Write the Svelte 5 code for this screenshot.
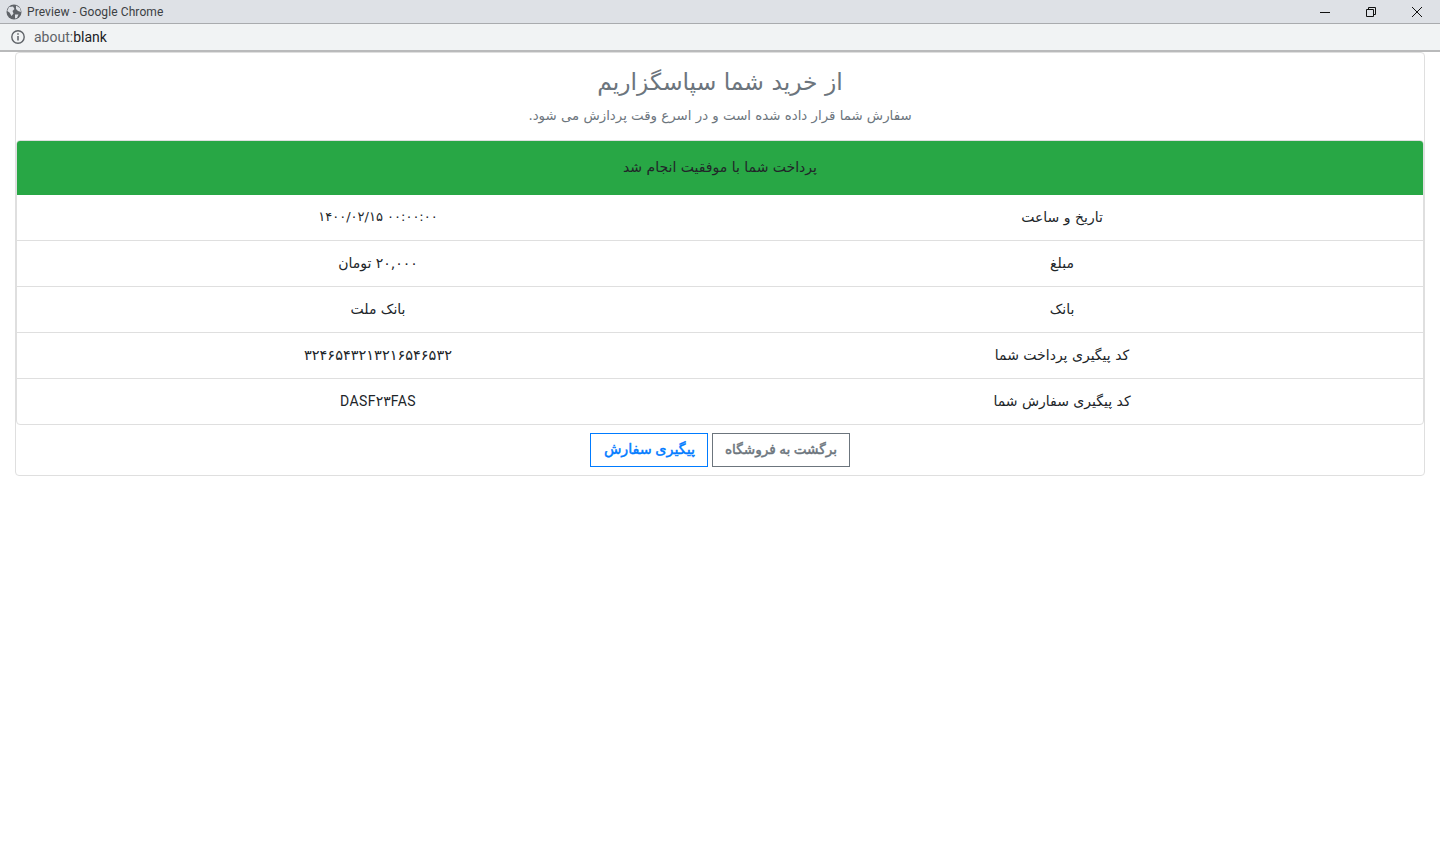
<script>
	const rows = [
		{ label: "تاریخ و ساعت", value: "۱۴۰۰/۰۲/۱۵ ۰۰:۰۰:۰۰", kind: "date" },
		{ label: "مبلغ", value: "۲۰,۰۰۰ تومان", kind: "" },
		{ label: "بانک", value: "بانک ملت", kind: "" },
		{ label: "کد پیگیری پرداخت شما", value: "۳۲۴۶۵۴۳۲۱۳۲۱۶۵۴۶۵۳۲", kind: "code" },
		{ label: "کد پیگیری سفارش شما", value: "DASF۲۳FAS", kind: "latin" },
	];
</script>

<div class="titlebar">
	<svg class="globe" viewBox="0 0 16 16" width="16" height="16">
		<circle cx="8" cy="8" r="7.5" fill="#5f6368" />
		<path d="M3 3 L7 2.6 L8.5 5 L6.5 7 L7.5 9.5 L5.5 12 L3.5 8.5 L1.2 7 Z M10 1.5 L14 4 L15 8 L12 7 L10 5 Z M9 10.5 L12.5 10.5 L11 14 L9 14.5 Z" fill="#dee1e6" />
	</svg>
	<span class="title">Preview - Google Chrome</span>
	<div class="controls">
		<svg width="10" height="10" viewBox="0 0 10 10"><path d="M0 5.5H10" stroke="#111" fill="none" /></svg>
		<svg width="10" height="10" viewBox="0 0 10 10"><path d="M0.5 2.5H7.5V9.5H0.5Z M2.5 2.5V0.5H9.5V7.5H7.5" stroke="#111" fill="none" /></svg>
		<svg width="10" height="10" viewBox="0 0 10 10"><path d="M0 0L10 10M10 0L0 10" stroke="#111" fill="none" /></svg>
	</div>
</div>
<div class="addressbar">
	<svg width="14" height="14" viewBox="0 0 14 14">
		<circle cx="7" cy="7" r="6.2" fill="none" stroke="#5f6368" stroke-width="1.4" />
		<path d="M7 6V10.6M7 3.2V4.8" stroke="#5f6368" stroke-width="1.5" fill="none" />
	</svg>
	<span class="url"><span class="scheme">about:</span>blank</span>
</div>

<main class="card">
	<header dir="rtl">
		<h1>از خرید شما سپاسگزاریم</h1>
		<p>سفارش شما قرار داده شده است و در اسرع وقت پردازش می شود.</p>
	</header>
	<div class="box" dir="rtl">
		<div class="status">پرداخت شما با موفقیت انجام شد</div>
		{#each rows as row}
			<div class="row">
				<div>{row.label}</div>
				<div class={row.kind} dir={row.kind === "date" ? "ltr" : "rtl"}>{row.value}</div>
			</div>
		{/each}
	</div>
	<footer dir="rtl">
		<button class="muted">برگشت به فروشگاه</button>
		<button class="primary">پیگیری سفارش</button>
	</footer>
</main>

<style>
	:global(body) {
		background: #fff;
		font-family: "DejaVu Sans", sans-serif;
	}

	.titlebar {
		height: 23px;
		background: #dee1e6;
		border-bottom: 1px solid #a9abae;
		display: flex;
		align-items: center;
		padding-left: 6px;
		font-family: Roboto, sans-serif;
		font-size: 12px;
		letter-spacing: 0.1px;
		color: #3c4043;
	}

	.title {
		margin-left: 5px;
	}

	.controls {
		margin-left: auto;
		display: flex;
		gap: 36px;
		padding-right: 18px;
	}

	.addressbar {
		height: 26px;
		background: #f1f3f4;
		border-bottom: 2px solid #b9babb;
		display: flex;
		align-items: center;
		padding-left: 11px;
		font-family: Roboto, sans-serif;
		font-size: 14px;
		color: #202124;
	}

	.url {
		margin-left: 9px;
	}

	.scheme {
		color: #5f6368;
	}

	.card {
		width: 1408px;
		margin: 0 15px;
		border: 1px solid #dfdfdf;
		border-radius: 4px;
		background: #fff;
	}

	header {
		height: 87px;
		text-align: center;
		color: #6c757d;
	}

	h1 {
		margin: 0;
		padding-top: 13px;
		font-size: 23.4px;
		line-height: 32px;
		font-weight: 400;
	}

	p {
		margin: 0;
		padding-top: 8px;
		font-size: 13.35px;
		line-height: 20px;
	}

	.box {
		border: 1px solid #dfdfdf;
		border-radius: 4px;
	}

	.status {
		height: 52px;
		padding-bottom: 2px;
		line-height: 52px;
		background: #28a745;
		border-radius: 3px 3px 0 0;
		text-align: center;
		font-size: 14px;
		color: #212529;
	}

	.row {
		display: grid;
		grid-template-columns: 1fr 1fr;
		padding: 0 19px 2px;
		box-sizing: border-box;
		height: 46px;
		border-bottom: 1px solid #dfdfdf;
		text-align: center;
		align-items: center;
		font-size: 14px;
		color: #212529;
	}

	.row:last-child {
		border-bottom: 0;
		height: 45px;
	}

	.date {
		font-size: 13px;
	}

	.code {
		font-size: 14.5px;
	}

	.latin {
		font-family: Roboto, "DejaVu Sans", sans-serif;
		letter-spacing: 0.4px;
	}

	footer {
		display: flex;
		justify-content: center;
		gap: 4px;
		padding: 8px 0;
	}

	button {
		height: 34px;
		padding: 0 12px 2px;
		background: #fff;
		border: 1px solid;
		font-family: Roboto, "DejaVu Sans", sans-serif;
		-webkit-text-stroke: 0.45px;
	}

	.muted {
		padding: 0 11.5px 2px;
		font-size: 13.65px;
		color: #6c757d;
		border-color: #6c757d;
	}

	.primary {
		padding: 0 12.5px 2px;
		font-size: 14.3px;
		color: #007bff;
		border-color: #007bff;
	}
</style>
